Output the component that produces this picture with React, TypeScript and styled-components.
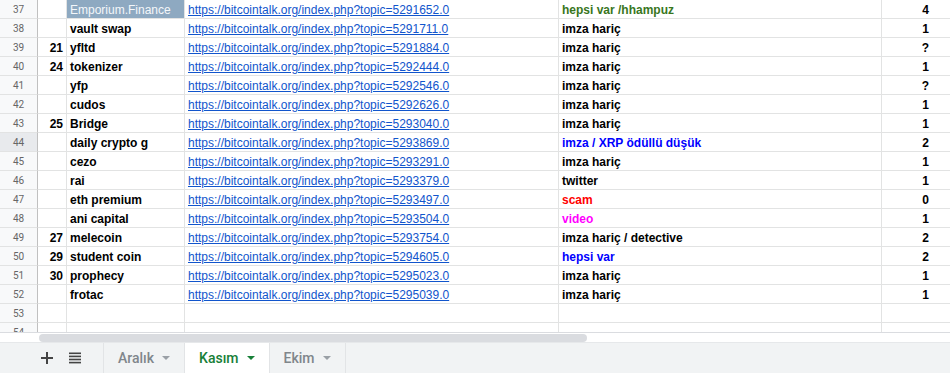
import React from 'react'
import styled, { createGlobalStyle, css } from 'styled-components'

const GlobalStyle = createGlobalStyle`
  html, body {
    margin: 0;
    padding: 0;
    background: #ffffff;
    overflow: hidden;
  }
`

const COLS = '38px 29px 118px 374px 323px 88px'

// Whole sheet view
const Sheet = styled.div`
  width: 950px;
  height: 373px;
  display: flex;
  flex-direction: column;
  overflow: hidden;
  font-family: 'Liberation Sans', Arial, sans-serif;
`

const GridArea = styled.div`
  height: 332px;
  overflow: hidden;
  flex-shrink: 0;
`

const Row = styled.div`
  display: grid;
  grid-template-columns: ${COLS};
  height: 19px;
  width: 970px;
`

const RowHeader = styled.div<{ $active?: boolean }>`
  ${({ $active }) => css`
    background: ${$active ? '#e8eaed' : '#f8f9fa'};
    color: #666;
    font-family: Roboto, Arial, sans-serif;
    font-size: 10px;
    display: flex;
    align-items: center;
    justify-content: center;
    border-right: 1px solid #c0c0c0;
    border-bottom: 1px solid #e2e3e3;
    box-sizing: border-box;
  `}
`

type Align = 'left' | 'right' | 'center'

const Cell = styled.div<{ $align?: Align; $color?: string; $bg?: string; $bold?: boolean }>`
  ${({ $align = 'left', $color = '#000', $bg = '#fff', $bold = true }) => css`
    display: flex;
    align-items: flex-end;
    justify-content: ${$align === 'left' ? 'flex-start' : $align === 'right' ? 'flex-end' : 'center'};
    padding: 0 3px;
    box-sizing: border-box;
    border-right: 1px solid #e2e3e3;
    border-bottom: 1px solid #e2e3e3;
    background: ${$bg};
    color: ${$color};
    font-size: 12px;
    font-weight: ${$bold ? 700 : 400};
    white-space: nowrap;
    overflow: hidden;
    line-height: 15px;
  `}
`

const Link = styled.a`
  color: #1155cc;
  text-decoration: underline;
  font-weight: 400;
  font-size: 12px;
`

const ScrollStrip = styled.div`
  height: 10px;
  flex-shrink: 0;
  background: #fff;
  border-top: 1px solid #dadce0;
  box-sizing: border-box;
  padding: 0 0 0 39px;
  display: flex;
  align-items: center;
`

const Thumb = styled.div`
  width: 548px;
  height: 8px;
  border-radius: 4px;
  background: #dadce0;
`

const TabBar = styled.div`
  flex: 1;
  background: #f1f3f4;
  display: flex;
  align-items: stretch;
  border-top: 1px solid #e6e8ea;
`

const IconButton = styled.div<{ $first?: boolean }>`
  width: 28px;
  margin-left: ${({ $first }) => ($first ? '33px' : '0')};
  display: flex;
  align-items: center;
  justify-content: center;
  color: #444;
`

const Tabs = styled.div`
  display: flex;
  margin-left: 14px;
  border-left: 1px solid #e2e4e6;
`

const Tab = styled.div<{ $active?: boolean }>`
  ${({ $active }) => css`
    display: flex;
    align-items: center;
    gap: 8px;
    padding: 0 14px 0 14px;
    background: ${$active ? '#fff' : 'transparent'};
    color: ${$active ? '#188038' : '#80868b'};
    font-family: Roboto, Arial, sans-serif;
    font-size: 14px;
    font-weight: 500;
    border-right: 1px solid #e2e4e6;
  `}
`

const Caret = styled.span<{ $active?: boolean }>`
  width: 0;
  height: 0;
  border-left: 4px solid transparent;
  border-right: 4px solid transparent;
  border-top: 4px solid ${({ $active }) => ($active ? '#188038' : '#9aa0a6')};
`

type Line = {
  n: number
  a?: string
  b?: string
  topic?: string
  d?: string
  dColor?: string
  e?: string
  bBg?: string
  bColor?: string
}

const rows: Line[] = [
  { n: 37, b: 'Emporium.Finance', bBg: '#8ea9c1', bColor: '#f4f7fa', topic: '5291652.0', d: 'hepsi var /hhampuz', dColor: '#38761d', e: '4' },
  { n: 38, b: 'vault swap', topic: '5291711.0', d: 'imza hariç', e: '1' },
  { n: 39, a: '21', b: 'yfltd', topic: '5291884.0', d: 'imza hariç', e: '?' },
  { n: 40, a: '24', b: 'tokenizer', topic: '5292444.0', d: 'imza hariç', e: '1' },
  { n: 41, b: 'yfp', topic: '5292546.0', d: 'imza hariç', e: '?' },
  { n: 42, b: 'cudos', topic: '5292626.0', d: 'imza hariç', e: '1' },
  { n: 43, a: '25', b: 'Bridge', topic: '5293040.0', d: 'imza hariç', e: '1' },
  { n: 44, b: 'daily crypto g', topic: '5293869.0', d: 'imza / XRP ödüllü düşük', dColor: '#0000ff', e: '2' },
  { n: 45, b: 'cezo', topic: '5293291.0', d: 'imza hariç', e: '1' },
  { n: 46, b: 'rai', topic: '5293379.0', d: 'twitter', e: '1' },
  { n: 47, b: 'eth premium', topic: '5293497.0', d: 'scam', dColor: '#ff0000', e: '0' },
  { n: 48, b: 'ani capital', topic: '5293504.0', d: 'video', dColor: '#ff00ff', e: '1' },
  { n: 49, a: '27', b: 'melecoin', topic: '5293754.0', d: 'imza hariç / detective', e: '2' },
  { n: 50, a: '29', b: 'student coin', topic: '5294605.0', d: 'hepsi var', dColor: '#0000ff', e: '2' },
  { n: 51, a: '30', b: 'prophecy', topic: '5295023.0', d: 'imza hariç', e: '1' },
  { n: 52, b: 'frotac', topic: '5295039.0', d: 'imza hariç', e: '1' },
  { n: 53 },
  { n: 54 },
]

const PlusIcon = () => (
  <svg width="12" height="12" viewBox="0 0 12 12">
    <path d="M5 0h2v5h5v2H7v5H5V7H0V5h5z" fill="#444" />
  </svg>
)

const ListIcon = () => (
  <svg width="12" height="12" viewBox="0 0 12 12">
    <rect x="0" y="0.5" width="12" height="1.6" fill="#444" />
    <rect x="0" y="3.6" width="12" height="1.6" fill="#444" />
    <rect x="0" y="6.7" width="12" height="1.6" fill="#444" />
    <rect x="0" y="9.8" width="12" height="1.6" fill="#444" />
  </svg>
)

export default function App() {
  return (
    <>
      <GlobalStyle />
      <Sheet>
        <GridArea>
          {rows.map((r) => (
            <Row key={r.n}>
              <RowHeader $active={r.n === 44}>{r.n}</RowHeader>
              <Cell $align="right">{r.a}</Cell>
              <Cell $bg={r.bBg} $color={r.bColor} $bold={!r.bBg}>
                {r.b}
              </Cell>
              <Cell>
                {r.topic && (
                  <Link href="#">{`https://bitcointalk.org/index.php?topic=${r.topic}`}</Link>
                )}
              </Cell>
              <Cell $color={r.dColor}>{r.d}</Cell>
              <Cell $align="center">{r.e}</Cell>
            </Row>
          ))}
        </GridArea>
        <ScrollStrip>
          <Thumb />
        </ScrollStrip>
        <TabBar>
          <IconButton $first>
            <PlusIcon />
          </IconButton>
          <IconButton>
            <ListIcon />
          </IconButton>
          <Tabs>
            <Tab>
              Aralık <Caret />
            </Tab>
            <Tab $active>
              Kasım <Caret $active />
            </Tab>
            <Tab>
              Ekim <Caret />
            </Tab>
          </Tabs>
        </TabBar>
      </Sheet>
    </>
  )
}
